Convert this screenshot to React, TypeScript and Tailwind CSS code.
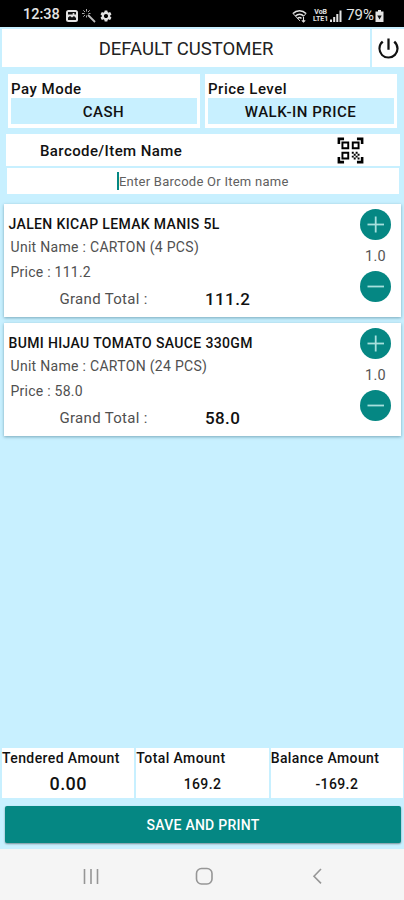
import React from "react";
import { MdPowerSettingsNew, MdQrCodeScanner, MdSettings } from "react-icons/md";

interface CartItem {
  name: string;
  unit: string;
  price: string;
  total: string;
  qty: string;
}

const items: CartItem[] = [
  {
    name: "JALEN KICAP LEMAK MANIS 5L",
    unit: "CARTON (4 PCS)",
    price: "111.2",
    total: "111.2",
    qty: "1.0"
  },
  {
    name: "BUMI HIJAU TOMATO SAUCE 330GM",
    unit: "CARTON (24 PCS)",
    price: "58.0",
    total: "58.0",
    qty: "1.0"
  }
];

const StatusBar: React.FC = () => (
  <div className="flex h-[27px] shrink-0 items-center bg-black pt-[4px] pr-[20px] pl-[23px] text-[#e4e4e4]">
    <span className="w-[43px] text-[14.5px] leading-none font-medium">12:38</span>
    <svg viewBox="0 0 12 12" className="h-3 w-3">
      <rect width="12" height="12" rx="2.500" fill="#e4e4e4" />
      <path d="M2 10V7.500l2-1.500 2 1.500L8 6l2 2v2z" fill="#111" />
      <path d="M2 2h8v2.500H2z" fill="#111" />
      <circle cx="7.500" cy="4" r="1" fill="#e4e4e4" />
    </svg>
    <svg viewBox="0 0 14 14" className="ml-[4px] h-3.5 w-3.5" stroke="#bdbdbd" fill="none">
      <path d="M6 6l7 7" strokeWidth="1.800" />
      <path
        d="M4.500 0v2.500M0 4.500h2.500M1.300 1.300l1.700 1.700M7.700 1.300L6 3M1.300 7.700L3 6M4.500 6.500v2M6.500 4.500h2"
        strokeWidth="0.900"
      />
    </svg>
    <MdSettings className="ml-[3px] h-[14px] w-[14px]" />
    <div className="ml-auto flex items-center">
      <svg viewBox="0 0 16 14" className="h-3.5 w-4" stroke="#e4e4e4" fill="none" strokeWidth="1.500">
        <path d="M1 4.500C4.500 0.800 10.500 0.800 14 4.500M3.500 7C6 4.500 9.500 4.500 11.500 7M5.500 9.500c1.500-1.300 2.800-1.300 4 0" />
        <path d="M1 4.500L8 12M14 4.500L11.500 7.500" strokeWidth="0.900" />
        <path d="M11.500 8v5M9.800 11.300l1.700 1.700 1.700-1.700" strokeWidth="1.100" />
      </svg>
      <div className="ml-[4px] flex w-[17px] flex-col items-center text-[7px] leading-[7px] font-bold">
        <span>VoB</span>
        <span>LTE1</span>
      </div>
      <svg viewBox="0 0 12 12" className="ml-[1px] h-3 w-3" fill="#e4e4e4">
        <rect y="9.500" width="2" height="2.500" />
        <rect x="3.200" y="7" width="2" height="5" />
        <rect x="6.300" y="4" width="2" height="8" />
        <rect x="9.500" y="0.500" width="2" height="11.500" />
      </svg>
      <span className="ml-[4px] text-[15px] leading-none">79%</span>
      <svg viewBox="0 0 9 12" className="ml-[1px] h-3 w-[9px]">
        <path d="M3 0h3v1.500h2.500v10.500h-8V1.500H3z" fill="#e4e4e4" />
        <path d="M4.500 9.500L2.300 5.500h4.400z" fill="#111" />
      </svg>
    </div>
  </div>
);

const Selector: React.FC<{ label: string; value: string }> = ({ label, value }) => (
  <div className="h-[54px] flex-1 bg-white px-[3px] pt-1">
    <div className="h-5 pl-[0.5px] text-[15px] leading-[22px] font-medium tracking-[0.5px]">{label}</div>
    <div className="h-[26px] bg-[#c8f0ff] text-center text-[15px] leading-[28px] font-medium tracking-[0.5px]">
      {value}
    </div>
  </div>
);

const RoundButton: React.FC<{ plus?: boolean }> = ({ plus }) => (
  <button className="h-[31px] w-[31px] rounded-full bg-[#058783]">
    <svg viewBox="0 0 31 31" className="h-[31px] w-[31px]" stroke="#a6e0dd" strokeWidth="1.800">
      <path d="M7.500 15.500h16.500" />
      {plus && <path d="M15.700 7.500v16" />}
    </svg>
  </button>
);

const ItemCard: React.FC<{ item: CartItem }> = ({ item }) => (
  <div className="flex h-[112.7px] bg-white shadow-[0_1px_3px_rgba(0,60,80,0.4)]">
    <div className="flex-1 pt-[9px] pl-[4.500px] whitespace-nowrap text-[#505050]">
      <div className="h-[22px] text-[14px] leading-[23px] font-medium tracking-[0.36px] text-[#111]">{item.name}</div>
      <div className="h-[25px] pl-[2px] text-[14px] leading-[25px] tracking-[0.3px]">Unit Name : {item.unit}</div>
      <div className="h-[25px] pl-[2px] text-[14px] leading-[25px] tracking-[0.25px]">Price : {item.price}</div>
      <div className="flex h-7 pl-[51px] text-[15px] leading-[28px]">
        <span className="w-[145.5px] tracking-[0.3px]">Grand Total :</span>
        <span className="text-[17px] font-medium tracking-[0.4px] text-[#111]">{item.total}</span>
      </div>
    </div>
    <div className="flex w-[51px] flex-col items-center pt-[4.500px] text-[#555]">
      <RoundButton plus />
      <span className="h-[31px] text-[14.5px] leading-[33px] tracking-[0.3px]">{item.qty}</span>
      <RoundButton />
    </div>
  </div>
);

const Amount: React.FC<{ label: string; value: string; large?: boolean }> = ({ label, value, large }) => (
  <div className="h-[50px] flex-1 bg-white font-medium tracking-[0.4px] whitespace-nowrap">
    <div className="h-[21px] text-[14px] leading-[21px]">{label}</div>
    <div className={large ? "text-center text-[18px] leading-[30px]" : "text-center text-[14px] leading-[30px]"}>
      {value}
    </div>
  </div>
);

export default function App() {
  return (
    <div className="flex h-[900px] w-[404px] flex-col overflow-hidden bg-[#c8f0ff] font-[Roboto,sans-serif] text-[#111]">
      <StatusBar />

      <header className="mt-[2px] flex h-[38px] shrink-0 gap-[2px] pl-[2px]">
        <h1 className="w-[368px] bg-white text-center text-[18.5px] leading-[40px] font-normal text-[#222]">
          DEFAULT CUSTOMER
        </h1>
        <button className="flex flex-1 items-center justify-center bg-white">
          <MdPowerSettingsNew className="h-[27px] w-[27px]" />
        </button>
      </header>

      <div className="mt-[7px] flex gap-[5px] px-[7.500px]">
        <Selector label="Pay Mode" value="CASH" />
        <Selector label="Price Level" value="WALK-IN PRICE" />
      </div>

      <div className="mt-[6px] mr-1 ml-[6px] flex h-8 shrink-0 items-center justify-between bg-white pr-[34px] pl-[34px]">
        <span className="pt-[2px] text-[15px] font-medium tracking-[0.4px]">Barcode/Item Name</span>
        <MdQrCodeScanner className="h-[31px] w-[31px] text-black" />
      </div>
      <div className="mt-[2px] mr-[5px] ml-[7px] flex h-[26px] shrink-0 items-center justify-center bg-white">
        <span className="h-[18px] w-[1.500px] bg-[#058783]" />
        <span className="pt-px text-[13px] tracking-[0.26px] text-[#606060]">Enter Barcode Or Item name</span>
      </div>

      <main className="mt-[10px] flex flex-1 flex-col gap-[6.500px] pr-[3px] pl-1">
        {items.map((item) => (
          <ItemCard key={item.name} item={item} />
        ))}
      </main>

      <footer className="shrink-0">
        <div className="flex gap-[2px] pr-px pl-[2px]">
          <Amount label="Tendered Amount" value="0.00" large />
          <Amount label="Total Amount" value="169.2" />
          <Amount label="Balance Amount" value="-169.2" />
        </div>
        <div className="h-[51px] pt-2 pr-[3px] pl-[5px]">
          <button className="h-[37px] w-full rounded-[2px] bg-[#058783] pt-px text-[14px] font-medium tracking-[0.25px] text-white shadow-[0_1px_2px_rgba(0,0,0,0.4)]">
            SAVE AND PRINT
          </button>
        </div>
        <nav className="flex h-[51px] items-center bg-[#f5f5f5]">
          <svg viewBox="0 0 404 51" className="h-[51px] w-[404px]" fill="none" stroke="#969696" strokeWidth="1.600">
            <path d="M84.500 20v15M91 20v15M97.500 20v15" />
            <rect x="196.500" y="19.500" width="15.500" height="15.500" rx="5" />
            <path d="M321 20l-7 7.200 7 7.200" />
          </svg>
        </nav>
      </footer>
    </div>
  );
}
